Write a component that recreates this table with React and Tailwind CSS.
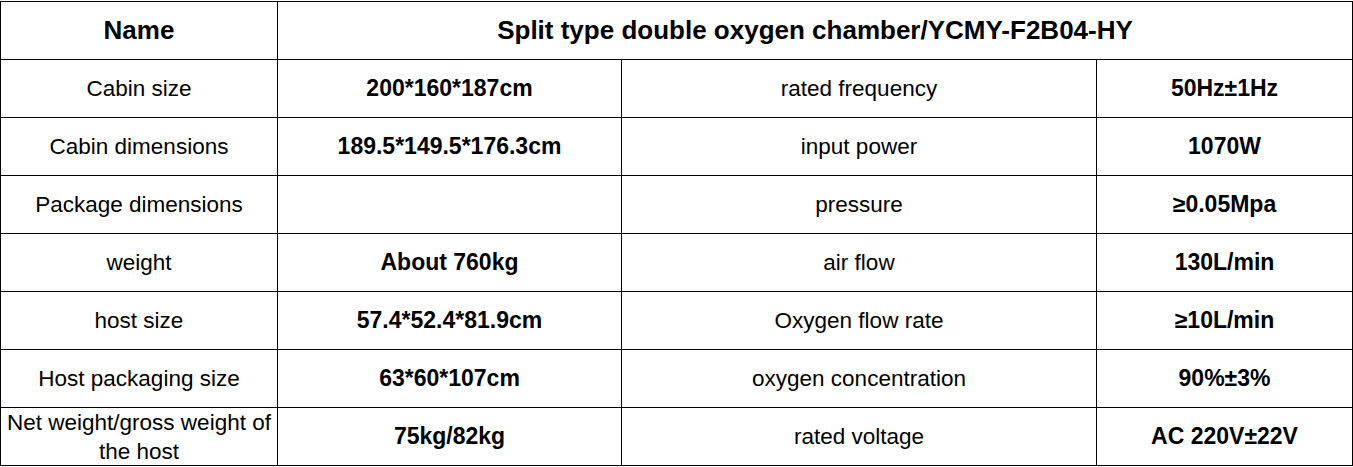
import React from 'react';

const rows = [
  ['Cabin size', '200*160*187cm', 'rated frequency', '50Hz±1Hz'],
  ['Cabin dimensions', '189.5*149.5*176.3cm', 'input power', '1070W'],
  ['Package dimensions', '', 'pressure', '≥0.05Mpa'],
  ['weight', 'About 760kg', 'air flow', '130L/min'],
  ['host size', '57.4*52.4*81.9cm', 'Oxygen flow rate', '≥10L/min'],
  ['Host packaging size', '63*60*107cm', 'oxygen concentration', '90%±3%'],
  ['Net weight/gross weight of the host', '75kg/82kg', 'rated voltage', 'AC 220V±22V']
];

const cell = 'flex items-center justify-center bg-white text-center px-1';

const App = () => {
  return (
    <div className="w-[1353px] h-[467px] bg-white pt-px font-['Liberation_Sans',Arial,sans-serif] text-black">
      <div className="grid grid-cols-[276px_343px_474px_255px] auto-rows-[57px] gap-px bg-black p-px w-[1353px]">
        <div className={`${cell} text-[26px] font-bold`}>Name</div>
        <div className={`${cell} col-span-3 text-[26px] font-bold`}>
          Split type double oxygen chamber/YCMY-F2B04-HY
        </div>
        {rows.map((row, i) => (
          <React.Fragment key={i}>
            <div className={`${cell} text-[22.5px] leading-[29px]`}>{row[0]}</div>
            <div className={`${cell} text-[23px] font-bold`}>{row[1]}</div>
            <div className={`${cell} text-[22.5px]`}>{row[2]}</div>
            <div className={`${cell} text-[23px] font-bold`}>{row[3]}</div>
          </React.Fragment>
        ))}
      </div>
    </div>
  );
};

export default App;
